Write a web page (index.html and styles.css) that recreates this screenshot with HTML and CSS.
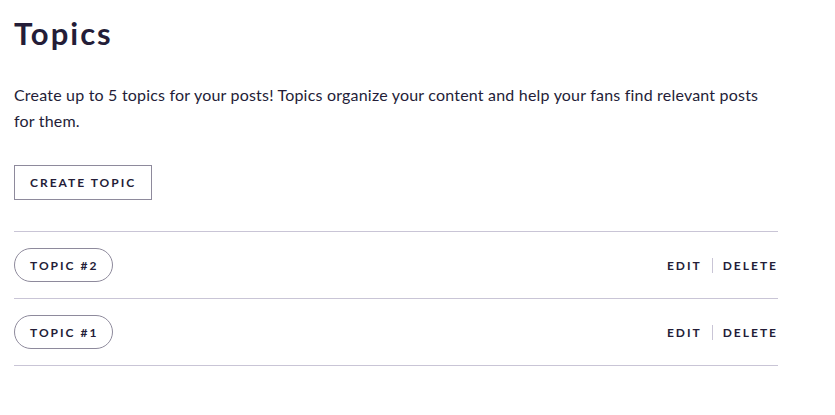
FILE: index.html
```html
<!DOCTYPE html>
<html>
<head>
<meta charset="utf-8">
<link rel="stylesheet" href="styles.css">
</head>
<body>
<main class="page">
  <h1 class="title">Topics</h1>
  <p class="intro">Create up to 5 topics for your posts! Topics organize your content and help your fans find relevant posts for them.</p>
  <button class="create-btn">CREATE TOPIC</button>
  <ul class="topic-list">
    <li class="topic-row">
      <span class="pill">TOPIC #2</span>
      <div class="actions"><a class="action">EDIT</a><span class="sep"></span><a class="action">DELETE</a></div>
    </li>
    <li class="topic-row">
      <span class="pill">TOPIC #1</span>
      <div class="actions"><a class="action">EDIT</a><span class="sep"></span><a class="action">DELETE</a></div>
    </li>
  </ul>
</main>
</body>
</html>
```

FILE: styles.css
```css
html, body { margin: 0; padding: 0; background: #fff; }
body { font-family: "Lato", "Noto Sans", sans-serif; color: #241d38; }
.page { padding: 12px 14px 0 14px; width: 764px; }
.title { margin: 0; font-size: 31px; font-weight: 700; line-height: 42px; letter-spacing: 2px; }
.intro { margin: 28px 0 0 0; font-size: 16px; line-height: 26px; letter-spacing: 0.2px; color: #241d38; }
.create-btn {
  margin-top: 31px; height: 35px; padding: 0 15px; background: #fff;
  border: 1px solid #8e8a9c; color: #241d38; font-family: inherit;
  font-size: 12px; font-weight: 700; letter-spacing: 2px; display: block;
}
.topic-list { list-style: none; margin: 31px 0 0 0; padding: 0; border-top: 1px solid #c9c5d6; }
.topic-row { display: flex; align-items: center; justify-content: space-between; height: 66px; border-bottom: 1px solid #c9c5d6; }
.pill {
  display: inline-flex; align-items: center; height: 32px; padding: 0 14px 0 15px;
  border: 1px solid #8e8a9c; border-radius: 17px; font-size: 12px; font-weight: 700; letter-spacing: 2px;
}
.actions { display: flex; align-items: center; padding-right: 0; }
.action { font-size: 12px; font-weight: 700; letter-spacing: 2px; color: #241d38; }
.sep { width: 1px; height: 15px; background: #c9c5d6; margin: 0 10px 0 10px; }
```
